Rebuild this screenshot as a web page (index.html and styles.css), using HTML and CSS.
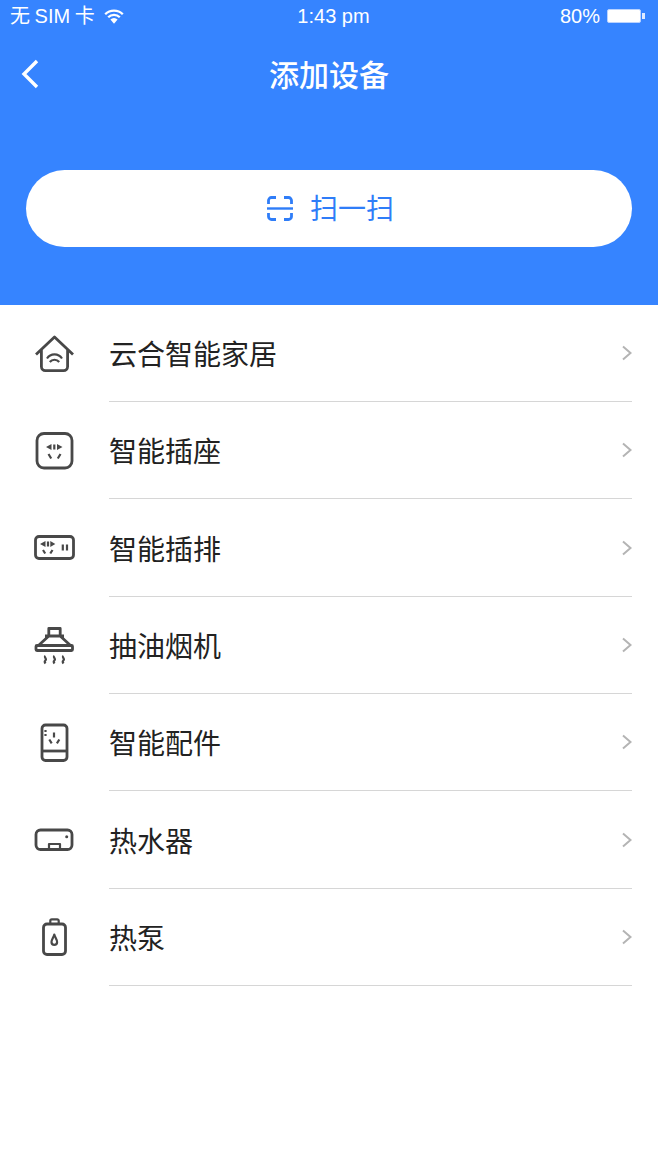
FILE: index.html
```html
<!DOCTYPE html>
<html lang="zh-CN">
<head>
    <meta charset="UTF-8">
    <meta name="viewport" content="width=device-width, initial-scale=1.0">
    <title>添加设备</title>
    <link rel="stylesheet" href="styles.css">
</head>
<body>
    <div class="header">
        <div class="status-bar">
            <div class="status-left">
                <span>无 SIM 卡</span>
                <svg class="wifi" viewBox="0 0 20 15" width="20" height="15">
                    <path d="M1.200 5.200a12.500 12.500 0 0 1 17.600 0M4.200 8.300a8.200 8.200 0 0 1 11.600 0" fill="none" stroke="#fff" stroke-width="2.300"/>
                    <path d="M6.400 10.600a5 5 0 0 1 7.200 0L10 14.800z" fill="#fff"/>
                </svg>
            </div>
            <div class="status-time">1:43 pm</div>
            <div class="status-right">
                <span>80%</span>
                <div class="battery"></div>
                <div class="battery-tip"></div>
            </div>
        </div>
        <div class="nav">
            <svg class="back" viewBox="0 0 20 30" width="20" height="30">
                <path d="M17 2 4 15l13 13" fill="none" stroke="#fff" stroke-width="3.400"/>
            </svg>
            <h1 class="nav-title">添加设备</h1>
        </div>
        <div class="scan-btn">
            <svg viewBox="0 0 26 25" width="26" height="25">
                <path d="M1.500 8V4.500a3 3 0 0 1 3-3H9M17 1.500h4.500a3 3 0 0 1 3 3V8M1.500 17v3.500a3 3 0 0 0 3 3H9M17 23.500h4.500a3 3 0 0 0 3-3V17" fill="none" stroke="#2f7df8" stroke-width="2.800"/>
                <path d="M0 12.500h26" stroke="#2f7df8" stroke-width="2.400"/>
            </svg>
            <span>扫一扫</span>
        </div>
    </div>

    <ul class="device-list">
        <li class="device">
            <svg class="device-icon" viewBox="0 0 48 48">
                <path d="M6 24.500 24.500 7 43 24.500M11.400 20v16.600a4 4 0 0 0 4 4h18.200a4 4 0 0 0 4-4V20"/>
                <path class="fine" d="M17 28.500a9 9 0 0 1 15 0M19.800 32a6 6 0 0 1 9.400 0"/>
            </svg>
            <div class="device-body"><span>云合智能家居</span><svg class="chevron" viewBox="0 0 10 16"><path d="M1 1.500 8.500 8 1 14.500"/></svg></div>
        </li>
        <li class="device">
            <svg class="device-icon" viewBox="0 0 48 48">
                <rect x="7" y="6.500" width="35" height="34.500" rx="7"/>
                <path class="fine" d="M24.300 17.500v5M18.500 27l2.700 4.500M30.500 27l-2.700 4.500"/>
                <path class="solid" d="M21.500 17v6l-5.500-3zM27 17v6l5.500-3z"/>
            </svg>
            <div class="device-body"><span>智能插座</span><svg class="chevron" viewBox="0 0 10 16"><path d="M1 1.500 8.500 8 1 14.500"/></svg></div>
        </li>
        <li class="device">
            <svg class="device-icon" viewBox="0 0 48 48">
                <rect x="5.500" y="12.500" width="38" height="22" rx="3.500"/>
                <path class="fine" d="M18 17.500v5M13 26l2.200 3.500M22.500 26l-2.200 3.500M32.800 20.500v6M37 20.500v6"/>
                <path class="solid" d="M15.500 17v6l-5.500-3zM20.300 17v6l5-3z"/>
            </svg>
            <div class="device-body"><span>智能插排</span><svg class="chevron" viewBox="0 0 10 16"><path d="M1 1.500 8.500 8 1 14.500"/></svg></div>
        </li>
        <li class="device">
            <svg class="device-icon" viewBox="0 0 48 48">
                <path d="M18.800 14V6.500h11.400V14M15 14h19M18.800 14 9 23M30.200 14l9.800 9"/>
                <rect x="6" y="23.500" width="36.500" height="5" rx="1"/>
                <path class="fine" d="M15.500 34c-2 1.500 2 3-.2 4.500-1 .8-.5 2 .2 3M24.500 34c-2 1.500 2 3-.2 4.500-1 .8-.5 2 .2 3M33.500 34c-2 1.500 2 3-.2 4.500-1 .8-.5 2 .2 3"/>
            </svg>
            <div class="device-body"><span>抽油烟机</span><svg class="chevron" viewBox="0 0 10 16"><path d="M1 1.500 8.500 8 1 14.500"/></svg></div>
        </li>
        <li class="device">
            <svg class="device-icon" viewBox="0 0 48 48">
                <rect x="12" y="6" width="25" height="35.500" rx="3.500"/>
                <path d="M12 32h25"/>
                <path class="fine" d="M15.500 11v2M15.500 15v2M24 13.500v5M19.300 20.500l2.400 3.800M29.300 20.500l-2.400 3.800"/>
            </svg>
            <div class="device-body"><span>智能配件</span><svg class="chevron" viewBox="0 0 10 16"><path d="M1 1.500 8.500 8 1 14.500"/></svg></div>
        </li>
        <li class="device">
            <svg class="device-icon" viewBox="0 0 48 48">
                <rect x="6" y="14" width="36" height="19.500" rx="4.500"/>
                <path class="fine" d="M19 33.500V28h11v5.500"/>
                <circle class="solid" cx="36.700" cy="20.800" r="1.500"/>
            </svg>
            <div class="device-body"><span>热水器</span><svg class="chevron" viewBox="0 0 10 16"><path d="M1 1.500 8.500 8 1 14.500"/></svg></div>
        </li>
        <li class="device">
            <svg class="device-icon" viewBox="0 0 48 48">
                <rect x="13.500" y="10" width="22" height="30.500" rx="3.500"/>
                <path class="fine" d="M20.300 9.500V6.800a1.500 1.500 0 0 1 1.500-1.500h5.400a1.500 1.500 0 0 1 1.500 1.500v2.700"/>
                <path class="fine" d="M24.300 20.500c-.8 3-2.800 5-2.800 7.500a2.800 2.800 0 0 0 5.600 0c0-2.500-2-4.500-2.800-7.500z"/>
            </svg>
            <div class="device-body"><span>热泵</span><svg class="chevron" viewBox="0 0 10 16"><path d="M1 1.500 8.500 8 1 14.500"/></svg></div>
        </li>
    </ul>
</body>
</html>
```

FILE: styles.css
```css
/* Blue top area and the device list below it */
body {
    margin: 0;
    background-color: #ffffff;
    font-family: "Liberation Sans", "Noto Sans CJK SC", sans-serif;
}
.header {
    height: 305px;
    background-color: #3684ff;
    color: #ffffff;
}
.status-bar {
    box-sizing: border-box;
    display: grid;
    grid-template-columns: 1fr auto 1fr;
    align-items: baseline;
    height: 32px;
    padding: 4px 13px 0 10px;
    font-size: 20px;
    line-height: 24px;
}
.status-left {
    display: flex;
    align-items: center;
    gap: 9px;
    word-spacing: -1px;
}
.status-time {
    margin-left: 12px;
}
.status-right {
    display: flex;
    align-items: center;
    justify-content: flex-end;
}
.status-right span {
    margin-right: 7px;
}
.battery {
    width: 34px;
    height: 14px;
    border: 1px solid #b9d2ff;
    border-radius: 2px;
    background-color: #ffffff;
    box-sizing: border-box;
}
.battery-tip {
    width: 3px;
    height: 6px;
    margin-left: 1px;
    background-color: #dfeaff;
}
.nav {
    position: relative;
    display: flex;
    align-items: center;
    justify-content: center;
    height: 86px;
}
.back {
    position: absolute;
    left: 20px;
    top: 27px;
}
.nav-title {
    margin: 0 0 4px;
    font-size: 30px;
    font-weight: 500;
}
.scan-btn {
    display: flex;
    align-items: center;
    justify-content: center;
    gap: 17px;
    height: 77px;
    margin: 52px 26px 0;
    padding-left: 3px;
    border-radius: 39px;
    background-color: #ffffff;
    color: #2f7df8;
    font-size: 28px;
}
.scan-btn span {
    margin-bottom: 3px;
}
.device-list {
    margin: 0;
    padding: 0;
    list-style: none;
}
.device {
    display: flex;
    height: 97px;
    padding-left: 30px;
    padding-right: 26px;
    color: #222222;
    font-size: 28px;
}
.device:nth-child(3n) {
    height: 98px;
}
.device-icon {
    flex: none;
    align-self: center;
    width: 48px;
    height: 48px;
    margin-right: 31px;
    fill: none;
    stroke: #484848;
    stroke-width: 2.800;
    stroke-linejoin: round;
}
.device-icon .fine {
    stroke-width: 2.200;
}
.device-icon .solid {
    fill: #484848;
    stroke: none;
}
.device-body {
    flex: 1;
    display: flex;
    align-items: center;
    justify-content: space-between;
    border-bottom: 1px solid #d6d6d6;
}
.chevron {
    width: 10px;
    height: 16px;
    fill: none;
    stroke: #b4b4b4;
    stroke-width: 2;
}
```
